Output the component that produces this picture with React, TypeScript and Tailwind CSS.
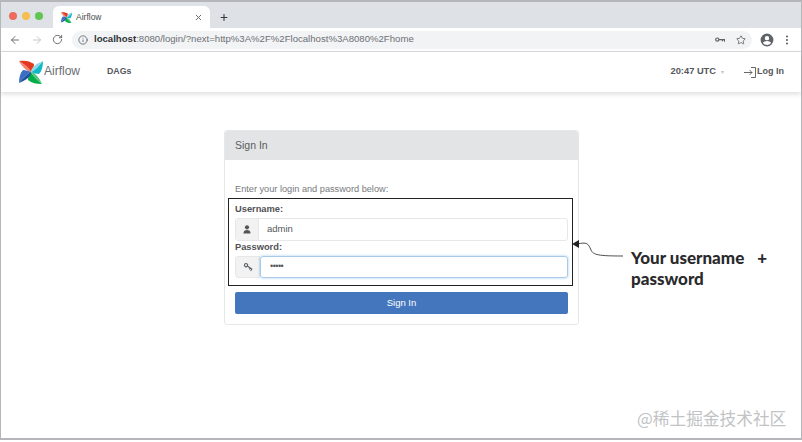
import React from 'react';
import { ArrowLeft, ArrowRight, RotateCw, Info, Star, EllipsisVertical, X, Plus } from 'lucide-react';

function Pinwheel({ size }: { size: number }) {
  return (
    <svg width={size} height={size} viewBox="0 0 24 24">
      <path d="M0 1 C6 0 11 1 15 4 C15 7 14 10 12 12 C10 8 5 4 0 1 Z" fill="#e43921" />
      <path d="M0 1 C5 4 10 8 12 12 C8 11 3 7 0 1 Z" fill="#f0826f" />
      <path d="M24 1 C24 6 23 11 20 14 C17 14 14 13 12 12 C16 10 20 6 24 1 Z" fill="#11b8c9" />
      <path d="M24 1 C20 6 16 10 12 12 C12 8 16 4 24 1 Z" fill="#8fd8e0" />
      <path d="M23 24 C17 24 13 23 9 20 C9 17 10 14 12 12 C14 16 18 20 23 24 Z" fill="#00ad46" />
      <path d="M23 24 C18 20 14 16 12 12 C16 13 20 17 23 24 Z" fill="#4cc57d" />
      <path d="M0 23 C0 18 1 13 4 10 C7 10 10 11 12 12 C8 14 4 18 0 23 Z" fill="#3b6fc4" />
      <path d="M0 23 C4 18 8 14 12 12 C12 16 8 20 0 23 Z" fill="#1f4fa3" />
    </svg>
  );
}

function UserGlyph() {
  return (
    <svg width="8" height="9" viewBox="0 0 9 10" fill="#555">
      <circle cx="4.500" cy="2.600" r="2.300" />
      <path d="M0.500 9.500 C0.500 6.500 2 5.500 4.500 5.500 C7 5.500 8.500 6.500 8.500 9.500 Z" />
    </svg>
  );
}

function AccountIcon() {
  return (
    <svg width="14" height="14" viewBox="0 0 24 24" fill="#5f6368">
      <path d="M12 1a11 11 0 1 0 0 22 11 11 0 0 0 0-22Zm0 4a3.800 3.800 0 1 1 0 7.600A3.800 3.800 0 0 1 12 5Zm0 15.600a8.700 8.700 0 0 1-7-3.600c.1-2.300 4.700-3.500 7-3.500s6.900 1.200 7 3.500a8.700 8.700 0 0 1-7 3.600Z" />
    </svg>
  );
}

function KeyGlyph({ className }: { className?: string }) {
  return (
    <svg width="10" height="6" viewBox="0 0 10 6" fill="none" stroke="#5f6368" strokeWidth="1.200" className={className}>
      <circle cx="2.300" cy="2.600" r="1.600" />
      <path d="M4 2.600 H9.500 V4.800 M7.400 2.600 V4.300" />
    </svg>
  );
}

function BrowserBar() {
  return (
    <div className="shrink-0">
      <div className="flex h-[26px] items-end bg-[#dee1e6] pl-[8px]">
        <div className="mb-[8px] flex w-[44px] gap-[5px]">
          <span className="size-[8px] rounded-full bg-[#ec6a5e]" />
          <span className="size-[8px] rounded-full bg-[#f4bf4f]" />
          <span className="size-[8px] rounded-full bg-[#61c554]" />
        </div>
        <div className="flex h-[22px] w-[157px] items-center rounded-t-[6px] bg-white pl-[8px] pr-[7px]">
          <Pinwheel size={11} />
          <span className="ml-[4px] flex-1 text-[8.500px] text-[#4a4c50]">Airflow</span>
          <X size={9} strokeWidth={2.500} color="#5f6368" />
        </div>
        <div className="mb-[3px] ml-[9px] flex h-[16px] w-[10px] items-center justify-center">
          <Plus size={11} strokeWidth={2.500} color="#35373a" />
        </div>
      </div>
      <div className="flex h-[24px] items-center border-b border-[#dadce0] bg-white pl-[8px] pr-[8px]">
        <ArrowLeft size={12} strokeWidth={1.800} color="#5f6368" />
        <ArrowRight size={12} strokeWidth={1.800} color="#c0c2c6" className="ml-[10px]" />
        <RotateCw size={11} strokeWidth={2} color="#5f6368" className="ml-[9px]" />
        <div className="ml-[9px] flex h-[18px] flex-1 items-center rounded-full bg-[#f1f3f4] pl-[6px] pr-[6px]">
          <Info size={10} strokeWidth={2} color="#5f6368" />
          <span className="ml-[6px] flex-1 text-[9.600px] text-[#6d7074]">
            <span className="font-bold text-[#303236]">localhost</span>:8080/login/?next=http%3A%2F%2Flocalhost%3A8080%2Fhome
          </span>
          <KeyGlyph />
          <Star size={10} strokeWidth={2} color="#5f6368" className="ml-[11px]" />
        </div>
        <div className="ml-[8px]">
          <AccountIcon />
        </div>
        <EllipsisVertical size={12} strokeWidth={2.200} color="#5f6368" className="ml-[7px]" />
      </div>
    </div>
  );
}

function TopNav() {
  return (
    <div className="flex h-[40px] shrink-0 items-center bg-white pl-[18px] pr-[17px] shadow-[0_2px_5px_rgba(0,0,0,0.14)]">
      <Pinwheel size={24} />
      <span className="ml-[1px] mb-[2px] text-[12px] text-[#6a6d70]">Airflow</span>
      <span className="ml-[27px] text-[8.800px] font-bold text-[#55585b]">DAGs</span>
      <div className="flex-1" />
      <span className="text-[9.300px] font-bold text-[#55585b]">20:47 UTC</span>
      <span className="ml-[5px] text-[6px] text-[#c4c4c4]">▾</span>
      <svg width="13" height="11" viewBox="0 0 13 11" fill="none" stroke="#55585b" strokeWidth="0.900" className="ml-[20px]">
        <path d="M0 5.500 H8 M5.500 3 L8 5.500 L5.500 8 M7 0.500 H11.500 V10.500 H7" />
      </svg>
      <span className="text-[9px] font-bold text-[#55585b]">Log In</span>
    </div>
  );
}

function LoginCard() {
  return (
    <div className="ml-[223px] mt-[38px] h-[195px] w-[355px] rounded-[3px] border border-[#e6e7e8] bg-white">
      <div className="flex h-[29px] items-center rounded-t-[3px] bg-[#e3e4e6] pl-[10px] text-[10.500px] text-[#5a5c5f]">Sign In</div>
      <p className="ml-[10px] mt-[24px] text-[9.200px] leading-[11px] text-[#77797c]">Enter your login and password below:</p>
      <div className="ml-[3px] mt-[3px] h-[88px] w-[345px] border-[1.500px] border-[#222] pl-[6px] pr-[4px] pt-[5px]">
        <div className="text-[9.300px] font-bold leading-[11px] text-[#4f5154]">Username:</div>
        <div className="mt-[3px] flex h-[23px] rounded-[3px] border border-[#e6e7e8]">
          <div className="flex w-[23px] items-center justify-center border-r border-[#e6e7e8] bg-[#f2f2f3]">
            <UserGlyph />
          </div>
          <span className="flex flex-1 items-center pl-[8px] text-[9.500px] text-[#55575a]">admin</span>
        </div>
        <div className="mt-[1px] text-[9.300px] font-bold leading-[11px] text-[#4f5154]">Password:</div>
        <div className="mt-[3px] flex h-[22px]">
          <div className="flex w-[25px] items-center justify-center rounded-l-[3px] border border-[#e6e7e8] bg-[#f2f2f3]">
            <KeyGlyph className="rotate-[35deg]" />
          </div>
          <span className="flex flex-1 items-center rounded-[3px] border border-[#a9c9e8] pl-[9px] text-[9px] tracking-[-0.500px] text-[#55575a] shadow-[0_0_3px_rgba(102,175,233,0.6)]">•••••</span>
        </div>
      </div>
      <div className="ml-[10px] mt-[6px] flex h-[22px] w-[333px] items-center justify-center rounded-[2px] bg-[#4476be] text-[9.500px] text-white">Sign In</div>
    </div>
  );
}

export default function App() {
  return (
    <div className="h-[442px] w-[802px] overflow-hidden bg-white font-['Liberation_Sans',sans-serif]">
      <div className="relative flex h-[440px] flex-col border-x border-b-2 border-t-2 border-x-[#b4b6b9] border-b-[#b4b6b9] border-t-[#b4b6b9]">
        <BrowserBar />
        <TopNav />
        <LoginCard />
        <svg width="60" height="26" viewBox="0 0 60 26" fill="none" className="absolute left-[570px] top-[237px]">
          <path d="M6 5 C16 3 17 4 20 11 C22 16 28 17 52 17" stroke="#3a3a3a" strokeWidth="0.900" />
          <path d="M1 5 L8 1 L8 9 Z" fill="#222" />
        </svg>
        <div className="absolute left-[630px] top-[245px] font-['Lato',sans-serif] text-[17px] font-black leading-[21px] text-[#2a2a2c]">
          Your username<span className="ml-[13px]">+</span>
          <br />
          password
        </div>
        <div className="absolute left-[636px] top-[406px] font-['Noto_Sans_CJK_SC',sans-serif] text-[16.700px] leading-[20px] text-[#c2c3c5]">@稀土掘金技术社区</div>
      </div>
    </div>
  );
}
